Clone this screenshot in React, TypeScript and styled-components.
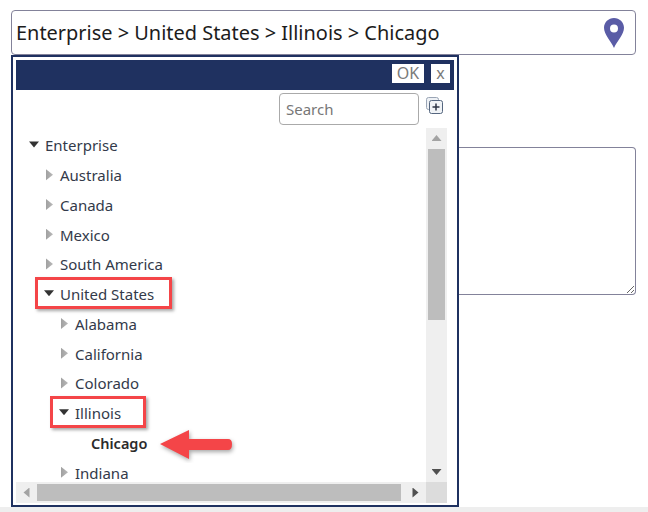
import React from 'react';
import styled, { createGlobalStyle } from 'styled-components';

const GlobalStyle = createGlobalStyle`
  html, body {
    margin: 0;
    padding: 0;
    background: #fff;
  }
  body {
    font-family: "Noto Sans", "Open Sans", sans-serif;
    overflow: hidden;
  }
`;

const navy = '#1f3160';
const red = '#f44548';

const Page = styled.div`
  width: 648px;
  height: 512px;
  display: flex;
  flex-direction: column;
  overflow: hidden;
`;

const Content = styled.div`
  height: 507px;
  flex-shrink: 0;
  padding: 10px 12px 0 11px;
  box-sizing: border-box;
  display: flex;
  flex-direction: column;
`;

const Footer = styled.div`
  height: 5px;
  background: #eeeeee;
`;

const PathInput = styled.div`
  height: 45px;
  flex-shrink: 0;
  box-sizing: border-box;
  border: 1px solid #83829a;
  border-radius: 4px;
  padding: 0 11px 0 4px;
  display: flex;
  align-items: center;
  justify-content: space-between;
  font-size: 19.95px;
  color: #1c1c1c;
`;

const Lower = styled.div`
  display: flex;
  align-items: flex-start;
`;

const Popup = styled.div`
  width: 448px;
  height: 452px;
  box-sizing: border-box;
  border: 2px solid ${navy};
  padding: 3px 3px 2px;
  flex-shrink: 0;
`;

const TitleBar = styled.div`
  height: 30px;
  background: ${navy};
  display: flex;
  align-items: flex-start;
  justify-content: flex-end;
  gap: 7px;
  padding: 4px 4px 0 0;
  box-sizing: border-box;
`;

const BarButton = styled.button<{ $w: number }>`
  width: ${({ $w }) => $w}px;
  height: 19px;
  border: 0;
  padding: 0;
  background: #fff;
  color: #7a7a7a;
  font: 16px/19px "Noto Sans", sans-serif;
`;

const SearchRow = styled.div`
  height: 38px;
  display: flex;
  align-items: center;
  justify-content: flex-end;
  gap: 7px;
  padding: 0 11px 0 0;
`;

const SearchBox = styled.input`
  width: 140px;
  height: 32px;
  box-sizing: border-box;
  border: 1px solid #aaaaaa;
  border-radius: 4px;
  padding: 0 6px;
  font: 15px "Noto Sans", sans-serif;
  &::placeholder {
    color: #777;
    opacity: 1;
  }
`;

const ExpandIcon = styled.svg`
  width: 17px;
  height: 17px;
  margin-bottom: 8px;
`;

const TreeFrame = styled.div`
  display: grid;
  grid-template-columns: 410px 21px;
  grid-template-rows: 354px 21px;
`;

const Tree = styled.ul`
  list-style: none;
  margin: 0;
  padding: 2.5px 0 0 13px;
  overflow: hidden;
  color: #333a4a;
  font-size: 15px;
`;

const Node = styled.li<{ $depth: number }>`
  height: 29.75px;
  padding-left: ${({ $depth }) => $depth * 15}px;
  display: flex;
  align-items: center;
`;

const Label = styled.span<{ $bold?: boolean }>`
  position: relative;
  display: inline-flex;
  align-items: center;
  gap: 6px;
  font-weight: ${({ $bold }) => ($bold ? 600 : 400)};
  font-size: ${({ $bold }) => ($bold ? '14.5px' : 'inherit')};
  color: ${({ $bold }) => ($bold ? '#2b2b2b' : 'inherit')};
  ${({ $bold }) => ($bold ? 'margin-left: 17px;' : '')}
`;

const Highlight = styled.span<{ $w: number }>`
  position: absolute;
  left: -9px;
  top: -7px;
  width: ${({ $w }) => $w}px;
  height: 32px;
  box-sizing: border-box;
  border: 3px solid ${red};
  box-shadow: 2px 2px 3px rgba(0, 0, 0, 0.35);
`;

const Caret = styled.i<{ $open?: boolean }>`
  width: 10px;
  height: 12px;
  display: block;
  flex-shrink: 0;
  background: ${({ $open }) =>
    $open ? '#333' : 'linear-gradient(90deg, #9a9a9a, #bcbcbc)'};
  clip-path: ${({ $open }) =>
    $open
      ? 'polygon(0 17%, 100% 17%, 50% 67%)'
      : 'polygon(20% 0, 90% 46%, 20% 92%)'};
`;

const ArrowWrap = styled.svg`
  position: absolute;
  left: 66px;
  top: -8px;
  width: 80px;
  height: 38px;
`;

const VTrack = styled.div`
  background: #efefef;
  display: flex;
  flex-direction: column;
  align-items: center;
  padding: 0 2px;
`;

const HTrack = styled.div`
  background: #efefef;
  display: flex;
  align-items: center;
  padding: 2px 0;
`;

const ArrowSlot = styled.div`
  flex: 0 0 21px;
  height: 21px;
  width: 21px;
  display: flex;
  align-items: center;
  justify-content: center;
`;

const Thumb = styled.div<{ $vertical?: boolean }>`
  background: #bdbdbd;
  ${({ $vertical }) =>
    $vertical ? 'width: 17px; height: 171px;' : 'height: 17px; width: 364px;'}
`;

const Spacer = styled.div`
  flex: 1;
`;

const Corner = styled.div`
  background: #dcdcdc;
`;

const ScrollArrow = styled.i<{ $dir: 'up' | 'down' | 'left' | 'right'; $dim?: boolean }>`
  display: block;
  width: 10px;
  height: 10px;
  background: ${({ $dim }) => ($dim ? '#a3a3a3' : '#505050')};
  clip-path: ${({ $dir }) =>
    ({
      up: 'polygon(50% 15%, 100% 75%, 0 75%)',
      down: 'polygon(0 25%, 100% 25%, 50% 85%)',
      left: 'polygon(80% 0, 80% 100%, 20% 50%)',
      right: 'polygon(20% 0, 20% 100%, 80% 50%)',
    })[$dir]};
`;

const Side = styled.div`
  flex: 1;
  padding-top: 92px;
  min-width: 0;
`;

const Notes = styled.textarea`
  display: block;
  width: 100%;
  height: 148px;
  box-sizing: border-box;
  border: 1px solid #83829a;
  border-left: 0;
  border-radius: 0 4px 4px 0;
  outline: none;
  resize: both;
  margin: 0;
`;

const items: { name: string; depth: number; open?: boolean; leaf?: boolean; box?: number; arrow?: boolean }[] = [
  { name: 'Enterprise', depth: 0, open: true },
  { name: 'Australia', depth: 1 },
  { name: 'Canada', depth: 1 },
  { name: 'Mexico', depth: 1 },
  { name: 'South America', depth: 1 },
  { name: 'United States', depth: 1, open: true, box: 137 },
  { name: 'Alabama', depth: 2 },
  { name: 'California', depth: 2 },
  { name: 'Colorado', depth: 2 },
  { name: 'Illinois', depth: 2, open: true, box: 96 },
  { name: 'Chicago', depth: 3, leaf: true, arrow: true },
  { name: 'Indiana', depth: 2 },
];

export default function App() {
  return (
    <Page>
      <GlobalStyle />
      <Content>
        <PathInput>
          <span>Enterprise &gt; United States &gt; Illinois &gt; Chicago</span>
          <svg width="20" height="30" viewBox="0 0 20 30">
            <path
              fillRule="evenodd"
              fill="#5a5ca6"
              d="M10 0C4.500 0 0 4.300 0 9.800 0 16.500 6.800 23 10 30c3.200-7 10-13.500 10-20.200C20 4.300 15.500 0 10 0zm0 6.500a4 4 0 1 1 0 8 4 4 0 0 1 0-8z"
            />
          </svg>
        </PathInput>
        <Lower>
          <Popup>
            <TitleBar>
              <BarButton $w={32}>OK</BarButton>
              <BarButton $w={19}>x</BarButton>
            </TitleBar>
            <SearchRow>
              <SearchBox placeholder="Search" readOnly />
              <ExpandIcon viewBox="0 0 17 17">
                <rect x="0.500" y="0.500" width="12" height="12" rx="2" fill="#eef1f5" stroke="#9aa5b5" />
                <rect x="3.500" y="3.500" width="13" height="13" rx="2" fill="#f0f3f6" stroke="#55667f" />
                <path d="M10 6.500v7M6.500 10h7" stroke="#2c3545" strokeWidth="1.500" />
              </ExpandIcon>
            </SearchRow>
            <TreeFrame>
              <Tree>
                {items.map((it) => (
                  <Node key={it.name} $depth={it.depth}>
                    <Label $bold={it.leaf}>
                      {!it.leaf && <Caret $open={it.open} />}
                      {it.name}
                      {it.box && <Highlight $w={it.box} />}
                      {it.arrow && (
                        <ArrowWrap viewBox="0 0 80 38">
                          <path
                            d="M3 19 L32 5 L32 14 L71 14 Q75 14 75 19 Q75 25 71 25 L32 25 L32 34 Z"
                            fill={red}
                            style={{ filter: 'drop-shadow(1px 2px 2px rgba(0,0,0,.35))' }}
                          />
                        </ArrowWrap>
                      )}
                    </Label>
                  </Node>
                ))}
              </Tree>
              <VTrack>
                <ArrowSlot><ScrollArrow $dir="up" $dim /></ArrowSlot>
                <Thumb $vertical />
                <Spacer />
                <ArrowSlot><ScrollArrow $dir="down" /></ArrowSlot>
              </VTrack>
              <HTrack>
                <ArrowSlot><ScrollArrow $dir="left" $dim /></ArrowSlot>
                <Thumb />
                <Spacer />
                <ArrowSlot><ScrollArrow $dir="right" /></ArrowSlot>
              </HTrack>
              <Corner />
            </TreeFrame>
          </Popup>
          <Side>
            <Notes readOnly />
          </Side>
        </Lower>
      </Content>
      <Footer />
    </Page>
  );
}
